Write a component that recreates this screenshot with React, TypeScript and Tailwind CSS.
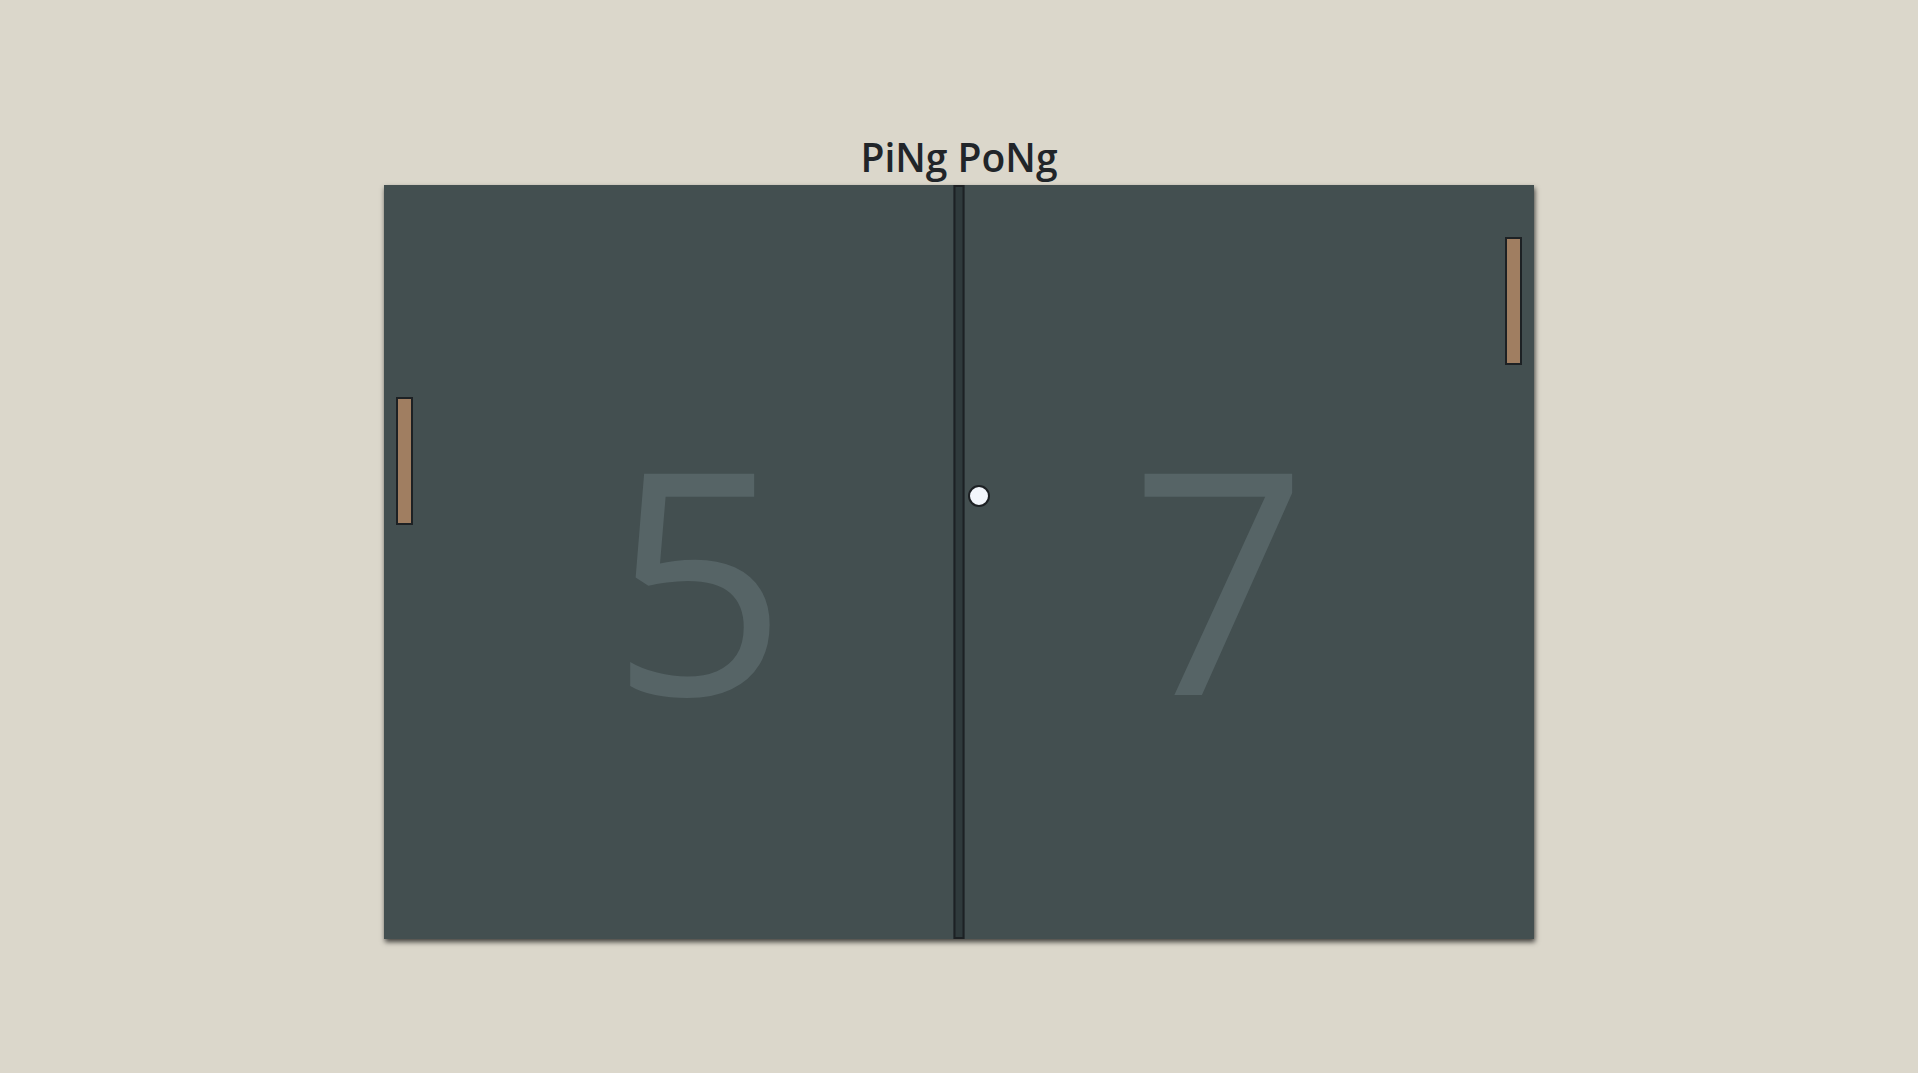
export default function App() {
  return (
    <div className="min-h-screen w-full bg-[#dbd7cb] flex flex-col items-center pt-[129px] font-['Open_Sans',sans-serif]">
      {/* titulo */}
      <h1 className="text-[39px] leading-[56px] font-semibold text-[#212529]">PiNg PoNg</h1>

      {/* mesa */}
      <div className="relative w-[60vw] h-[754px] bg-[#434f50] shadow-[1px_3px_5px_rgba(0,0,0,0.7)] overflow-hidden">
        {/* placar */}
        <div className="absolute inset-0 flex items-center justify-center pt-[26px]">
          <div className="flex gap-[343px] text-[310px] leading-none text-[#566466]">
            <span>5</span>
            <span>7</span>
          </div>
        </div>

        {/* rede */}
        <div className="absolute top-0 bottom-0 left-1/2 -translate-x-1/2 w-[11px] bg-[#2f3a3c] border-2 border-[#1d2124]" />

        {/* raquetes */}
        <div className="absolute left-[12px] top-[212px] w-[17px] h-[128px] bg-[#a07e61] border-2 border-[#1d2124]" />
        <div className="absolute right-[12px] top-[52px] w-[17px] h-[128px] bg-[#a07e61] border-2 border-[#1d2124]" />

        {/* bola */}
        <div className="absolute left-[584px] top-[300px] w-[22px] h-[22px] rounded-full bg-[#f3f7fc] border-2 border-[#1d2124]" />
      </div>
    </div>
  );
}
